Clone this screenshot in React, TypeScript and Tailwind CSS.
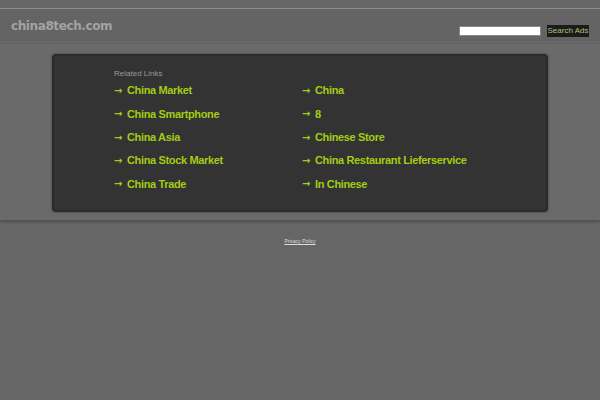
export default function App() {
  const left = ['China Market', 'China Smartphone', 'China Asia', 'China Stock Market', 'China Trade'];
  const right = ['China', '8', 'Chinese Store', 'China Restaurant Lieferservice', 'In Chinese'];

  const Link = ({ t }: { t: string }) => (
    <div className="h-[23.3px] flex items-center text-[#a3cc14] font-bold text-[11px] tracking-[-0.35px]">
      <span className="font-['DejaVu_Sans',sans-serif] text-[10px] w-[13px] tracking-normal">→</span>
      {t}
    </div>
  );

  return (
    <div className="w-[600px] h-[400px] bg-[#666666] font-['Liberation_Sans',Arial,sans-serif] overflow-hidden">
      <div className="h-[8px]" />
      <div className="h-[1px] bg-[#8a8a8a]" />
      {/* header */}
      <div className="h-[33px] bg-[#646464] flex items-center justify-between pl-[11px] pr-[11px]">
        <div className="font-['DejaVu_Sans',sans-serif] font-bold text-[12px] tracking-[-0.4px] text-[#a3a3a3] mt-[1px]">
          china8tech.com
        </div>
        <div className="flex items-center gap-[6px] mt-[10px]">
          <input className="w-[82px] h-[10px] bg-white border border-[#888] outline-none" />
          <button className="w-[42px] h-[12px] bg-[#1b1b1b] text-[#a9c67a] text-[8px] leading-[12px] text-center">Search Ads</button>
        </div>
      </div>
      <div className="h-[1px] bg-[#6f6f6f]" />
      {/* main band */}
      <div className="bg-[#6a6a6a] pt-[10px] pb-[8px] shadow-[0_2px_3px_rgba(0,0,0,0.25)] border-t border-[#5e5e5e]">
        <div className="mx-[52px] h-[158px] bg-[#333333] rounded-[4px] border-2 border-[#2b2b2b] shadow-[0_0_3px_rgba(0,0,0,0.4)] pl-[60px] pt-[13px]">
          <div className="text-[8px] text-[#9a9a9a] leading-[10px]">Related Links</div>
          <div className="flex">
            <div className="w-[188px] flex flex-col">
              {left.map((t) => (
                <Link key={t} t={t} />
              ))}
            </div>
            <div className="flex flex-col">
              {right.map((t) => (
                <Link key={t} t={t} />
              ))}
            </div>
          </div>
        </div>
      </div>
      <div className="flex justify-center mt-[18px]">
        <a className="text-[5px] text-[#dddddd] underline">Privacy Policy</a>
      </div>
    </div>
  );
}
